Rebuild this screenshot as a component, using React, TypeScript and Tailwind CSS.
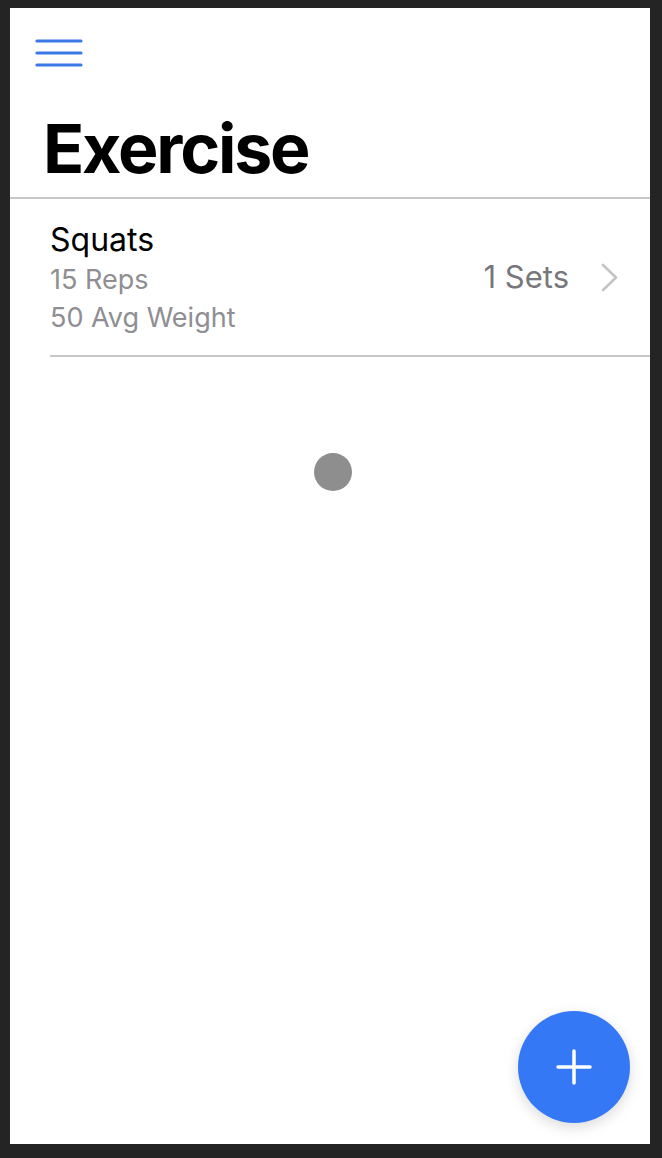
function Hamburger() {
  return (
    <svg width="48" height="30" viewBox="0 0 48 30" className="block">
      <g stroke="#3a78e6" strokeWidth="3.2" strokeLinecap="round">
        <line x1="2" y1="3" x2="46" y2="3" />
        <line x1="2" y1="15" x2="46" y2="15" />
        <line x1="2" y1="27" x2="46" y2="27" />
      </g>
    </svg>
  );
}

function Chevron() {
  return (
    <svg width="20" height="29" viewBox="0 0 20 29" className="block">
      <polyline
        points="3,2 16,14.5 3,27"
        fill="none"
        stroke="#c4c4c8"
        strokeWidth="2.6"
        strokeLinecap="round"
        strokeLinejoin="round"
      />
    </svg>
  );
}

export default function App() {
  return (
    <div
      className="h-[1158px] w-[662px] bg-[#242424] pt-[8px] pl-[10px] pr-[12px] pb-[14px]"
      style={{ fontFamily: "Inter, 'Liberation Sans', sans-serif" }}
    >
      <div className="relative flex h-full flex-col bg-white">
        {/* Header */}
        <div className="pl-[25px] pt-[30px]">
          <Hamburger />
        </div>
        <h1 className="ml-[33px] mt-[46px] text-[68px] font-bold leading-[68px] tracking-[-2.2px] text-black">
          Exercise
        </h1>
        <div className="mt-[15px] h-[2px] bg-[#c8c8c8]" />

        {/* List */}
        <div className="pl-[40px]">
          <div className="flex items-center pr-[30px] pt-[19px] pb-[18px]">
            <div className="flex flex-1 flex-col">
              <span className="text-[32px] leading-[43px] text-black">Squats</span>
              <span className="text-[27px] leading-[38px] text-[#8e8e93]">15 Reps</span>
              <span className="text-[27px] leading-[38px] text-[#8e8e93]">50 Avg Weight</span>
            </div>
            <span className="text-[31px] text-[#77777c]">1 Sets</span>
            <div className="ml-[31px]">
              <Chevron />
            </div>
          </div>
          <div className="h-[2px] bg-[#c8c8c8]" />
        </div>

        {/* Loading dot */}
        <div className="mt-[96px] flex justify-center">
          <div className="ml-[6px] size-[38px] rounded-full bg-[#8e8e8e]" />
        </div>

        {/* FAB */}
        <button className="absolute right-[20px] bottom-[21px] flex size-[112px] items-center justify-center rounded-full bg-[#3478f6] shadow-[0_4px_14px_rgba(0,0,0,0.15)]">
          <svg width="36" height="36" viewBox="0 0 36 36">
            <g stroke="white" strokeWidth="3.5" strokeLinecap="round">
              <line x1="18" y1="2" x2="18" y2="34" />
              <line x1="2" y1="18" x2="34" y2="18" />
            </g>
          </svg>
        </button>
      </div>
    </div>
  );
}
